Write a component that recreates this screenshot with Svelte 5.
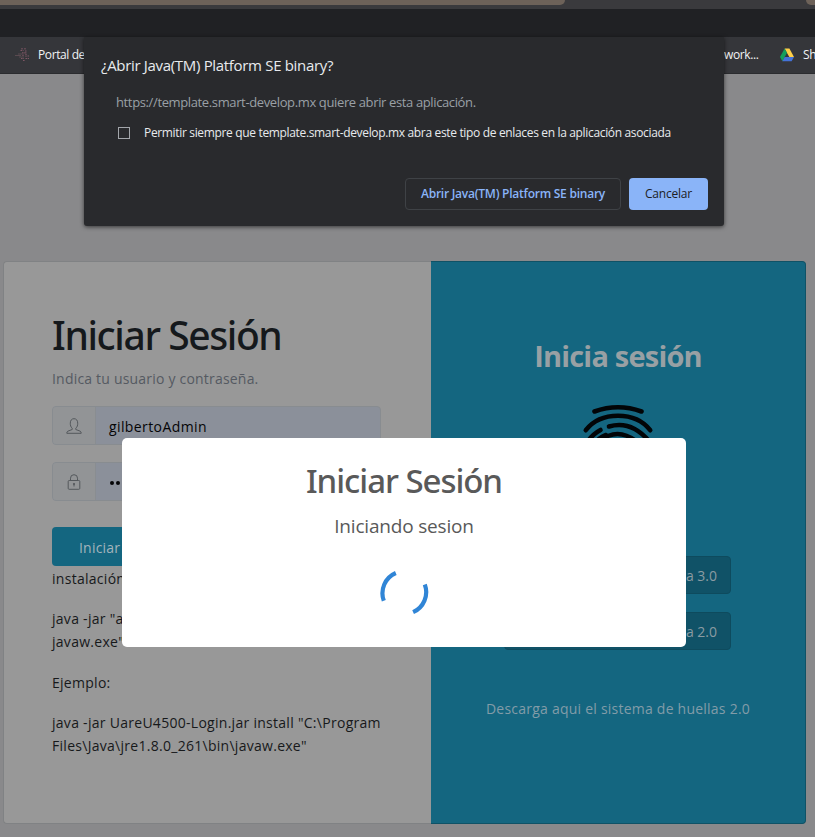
<script>
  const notes = [
    ['instalación'],
    ['java -jar "a', 'javaw.exe"'],
    ['Ejemplo:'],
    ['java -jar UareU4500-Login.jar install "C:\\Program', 'Files\\Java\\jre1.8.0_261\\bin\\javaw.exe"']
  ];
</script>

<div class="window">
  <div class="tabs"><div class="tab"></div><div class="tab next"></div></div>
  <div class="toolbar"></div>
  <div class="bookmarks">
    <svg class="site" width="15" height="15" viewBox="0 0 15 15" fill="none" stroke="#7d5664" stroke-width="1.2">
      <path d="M0 8.500h6M3 7h4M4 10h5" stroke="#5a4a50" />
      <path d="M7 1v2M10 1v1.500M5.500 3.500h3M10 4h2M7 5.800h5M8 7.500v2M11 7v3M6 11.500h3M10.500 11.500h3.500M8 13.500h2M12.500 9h2" stroke-dasharray="1.6 .7" />
    </svg>
    <span class="bm-first">Portal de</span>
    <span class="bm-work">work...</span>
    <svg class="drive" width="14" height="14" viewBox="0 0 14 14">
      <path d="M4.600.5h4.800L14 9H9.300z" fill="#ffcf48" />
      <path d="M4.600.5 7 4.800 2.400 13.200 0 9z" fill="#159f5c" />
      <path d="M4.700 9H14l-2.400 4.300H2.300z" fill="#4472d8" />
    </svg>
    <span class="bm-share">Sh</span>
  </div>

  <main class="page">
    <div class="card">
      <section class="login">
        <h1>Iniciar Sesión</h1>
        <p class="hint">Indica tu usuario y contraseña.</p>
        <div class="field">
          <span class="addon">
            <svg width="16" height="16" viewBox="0 0 16 16" fill="none" stroke="#54585c" stroke-width="1">
              <path d="M6.200 10.200C4.700 9 4.300 7.300 4.300 5.200 4.300 2.300 5.700.7 8 .7s3.700 1.600 3.700 4.500c0 2.100-.4 3.800-1.900 5v1.300l4.400 1.700c.8.4 1 1 1 2.100H.8c0-1.100.2-1.700 1-2.100l4.400-1.700z" />
            </svg>
          </span>
          <span class="value">gilbertoAdmin</span>
        </div>
        <div class="field">
          <span class="addon">
            <svg width="16" height="16" viewBox="0 0 16 16" fill="none" stroke="#54585c" stroke-width="1">
              <rect x="2.200" y="6.500" width="11.600" height="8.800" rx="1" />
              <path d="M4.500 6.500V4.200a3.500 3.500 0 0 1 7 0v2.300" />
              <circle cx="8" cy="10" r=".7" fill="#54585c" />
              <path d="M8 10.500v2" />
            </svg>
          </span>
          <span class="value dots"><i></i><i></i></span>
        </div>
        <div class="submit">Iniciar</div>
        <div class="notes">
          {#each notes as lines}
            <p>{#each lines as line}<span>{line}</span>{/each}</p>
          {/each}
        </div>
      </section>

      <section class="finger">
        <h2>Inicia sesión</h2>
        <svg class="print" width="76" height="76" viewBox="0 0 76 76" fill="none" stroke="#020507" stroke-width="4.600" stroke-linecap="round">
          <path d="M14.500 8.500q23.500-8.500 47 0" />
          <path d="M5.800 27.200Q17 12.800 38 12.800t32.200 14.400" />
          <path d="M29 23.500Q51 17 69 38" />
          <path d="M20.500 27Q13 31 8 38" />
          <path d="M20 38q17-14 36 0" />
          <path d="M10 60q0-22 16-28M66 60q0-14-9-22" />
        </svg>
        <div class="versions">
          <div class="version">a 3.0</div>
          <div class="version">a 2.0</div>
        </div>
        <p class="download">Descarga aqui el sistema de huellas 2.0</p>
      </section>
    </div>
  </main>

  <div class="loading">
    <h2>Iniciar Sesión</h2>
    <p>Iniciando sesion</p>
    <svg width="50" height="50" viewBox="0 0 50 50" fill="none" stroke="#3085d6" stroke-width="4.200">
      <path d="M4.800 32.800A22 22 0 0 1 16.800 5" />
      <path d="M45.800 16.400A22 22 0 0 1 34.100 44.200" />
    </svg>
  </div>

  <div class="prompt">
    <h3>¿Abrir Java(TM) Platform SE binary?</h3>
    <p class="origin">https://template.smart-develop.mx quiere abrir esta aplicación.</p>
    <div class="always">
      <span class="box"></span>
      <span>Permitir siempre que template.smart-develop.mx abra este tipo de enlaces en la aplicación asociada</span>
    </div>
    <div class="actions">
      <div class="open">Abrir Java(TM) Platform SE binary</div>
      <div class="cancel">Cancelar</div>
    </div>
  </div>
</div>

<style>
  :global(body) { margin: 0; }
  .window {
    position: relative;
    width: 815px;
    height: 837px;
    overflow: hidden;
    display: flex;
    flex-direction: column;
    background: #89898b;
    font-family: "Open Sans", "Noto Sans", sans-serif;
    font-size: 14px;
    white-space: nowrap;
  }
  .window * { box-sizing: border-box; }
  h1, h2, h3, p { margin: 0; }
  .tabs { flex: none; height: 9px; background: #3a3a3d; display: flex; justify-content: space-between; }
  .tab { width: 565px; height: 5px; background: #6d6259; border-radius: 0 0 5px 0; }
  .next { width: 9px; border-radius: 0 0 0 5px; }
  .toolbar { flex: none; height: 28px; background: #202124; }
  .bookmarks {
    flex: none;
    height: 37px;
    background: #35363a;
    border-bottom: 1px solid #2b2c2f;
    display: flex;
    align-items: center;
    padding: 0 0 1px 15px;
    color: #f1f3f4;
    font-size: 12px;
    letter-spacing: -0.4px;
  }
  .bookmarks > * { flex: none; }
  .bm-first { width: 73px; margin-left: 8px; }
  .bm-work { width: 35px; margin-left: 613px; }
  .drive { margin-left: 21px; }
  .bm-share { margin-left: 9px; }

  .page { flex: 1; padding: 187px 9px 13px 3px; }
  .card { height: 563px; display: flex; }
  .login {
    width: 428px;
    padding: 49px 49px 0 48px;
    background: #989898;
    border: 1px solid #808284;
    border-right: 0;
    border-radius: 4px 0 0 4px;
    color: #17191b;
  }
  h1 { font-family: "Noto Sans", sans-serif; font-size: 39px; font-weight: 500; line-height: 47px; letter-spacing: -1.4px; color: #15191c; }
  .hint { margin-top: 10px; line-height: 22px; letter-spacing: 0.2px; color: #555a62; }
  .field {
    display: flex;
    width: 329px;
    height: 39px;
    margin-top: 16px;
    border: 1px solid #888c90;
    border-radius: 4px;
    background: #8b909a;
    overflow: hidden;
  }
  .field + .field { margin-top: 17px; }
  .addon {
    width: 43px;
    display: flex;
    align-items: center;
    justify-content: center;
    background: #929496;
    border-right: 1px solid #898d91;
  }
  .value { padding-left: 13px; line-height: 39px; letter-spacing: 0.4px; color: #050506; }
  .dots { display: flex; align-items: center; gap: 2px; padding-top: 3px; padding-left: 14px; }
  .dots i { width: 4px; height: 4px; border-radius: 50%; background: #050506; }
  .submit {
    width: 100px;
    height: 39px;
    margin-top: 26px;
    padding-left: 27px;
    border-radius: 4px;
    background: #146680;
    color: #a3b4bc;
    line-height: 42px;
    letter-spacing: 0.2px;
  }
  .notes { display: flex; flex-direction: column; gap: 17.4px; margin-top: 1px; letter-spacing: 0.28px; }
  .notes span { display: block; line-height: 23px; }

  .finger {
    width: 375px;
    padding-top: 75px;
    background: #146680;
    border: 1px solid #0f5266;
    border-left: 0;
    border-radius: 0 4px 4px 0;
    display: flex;
    flex-direction: column;
    align-items: center;
    color: #98a0a4;
  }
  .finger h2 { font-size: 29px; font-weight: 700; line-height: 38px; letter-spacing: -0.8px; }
  .print { margin-top: 28px; }
  .versions { margin: 77px 1px 0 0; display: flex; flex-direction: column; gap: 18px; }
  .version {
    width: 227px;
    height: 38px;
    padding-right: 13px;
    border: 1px solid #0e4b5e;
    border-radius: 4px;
    background: #105267;
    color: #8a9ba2;
    text-align: right;
    line-height: 37px;
  }
  .download { margin-top: 47px; line-height: 23px; letter-spacing: 0.23px; color: #829ca8; }

  .loading {
    position: absolute;
    left: 122px;
    top: 438px;
    width: 564px;
    height: 209px;
    padding-top: 23px;
    border-radius: 5px;
    background: #fff;
    display: flex;
    flex-direction: column;
    align-items: center;
    color: #595959;
  }
  .loading h2 { font-family: "Noto Sans", sans-serif; font-size: 33px; font-weight: 500; line-height: 40px; letter-spacing: -1.05px; }
  .loading p { margin-top: 13px; font-size: 19px; line-height: 24px; letter-spacing: -0.18px; }
  .loading svg { margin-top: 30px; }

  .prompt {
    position: absolute;
    left: 84px;
    top: 37px;
    width: 640px;
    height: 189px;
    padding: 17px 16px 0 17px;
    background: #292a2d;
    border-radius: 0 0 3px 3px;
    box-shadow: 0 1px 4px rgba(0, 0, 0, 0.6);
    color: #e8eaed;
  }
  h3 { font-size: 15px; font-weight: 400; line-height: 22px; letter-spacing: -0.32px; }
  .origin { margin: 16px 0 0 15px; font-size: 13px; line-height: 20px; letter-spacing: -0.37px; color: #9aa0a6; }
  .always { display: flex; align-items: center; gap: 14px; margin: 11px 0 0 17px; font-size: 12px; line-height: 20px; letter-spacing: -0.34px; }
  .box { width: 12px; height: 12px; border: 1px solid #a3a6ab; }
  .actions { display: flex; justify-content: flex-end; gap: 8px; margin-top: 35px; font-size: 12px; line-height: 30px; text-align: center; }
  .open { width: 216px; height: 32px; border: 1px solid #3f4246; border-radius: 4px; color: #8ab4f8; font-weight: 600; letter-spacing: -0.24px; }
  .cancel { width: 79px; height: 32px; border-radius: 4px; background: #8ab4f8; color: #202124; line-height: 32px; letter-spacing: -0.2px; }
</style>
